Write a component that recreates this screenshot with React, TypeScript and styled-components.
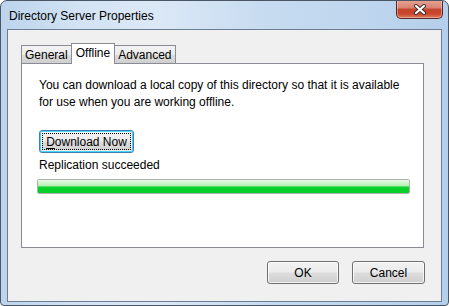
import styled, { createGlobalStyle } from "styled-components";

const Global = createGlobalStyle`
  html, body {
    margin: 0;
    padding: 0;
    background: #ffffff;
  }
  * {
    box-sizing: border-box;
  }
`;

const font = `"Liberation Sans", Arial, sans-serif`;

const App = () => {
  return (
    <>
      <Global />
      <Window>
        <TitleBar>
          <Title>Directory Server Properties</Title>
          <CloseButton aria-label="Close">
            <svg width="14" height="11" viewBox="0 0 14 11">
              <path d="M3 2 L11 9 M11 2 L3 9" stroke="#3b2b2b" strokeWidth="4" strokeLinecap="round" />
              <path d="M3 2 L11 9 M11 2 L3 9" stroke="#ffffff" strokeWidth="2.2" strokeLinecap="round" />
            </svg>
          </CloseButton>
        </TitleBar>
        <Client>
          <TabRow>
            <Tab>General</Tab>
            <Tab $active>Offline</Tab>
            <Tab>Advanced</Tab>
          </TabRow>
          <Panel>
            <Para>
              You can download a local copy of this directory so that it is available
              <br />
              for use when you are working offline.
            </Para>
            <Button $focused $width={95}>
              <FocusRing>
                <u>D</u>ownload Now
              </FocusRing>
            </Button>
            <Status>Replication succeeded</Status>
            <Progress>
              <ProgressFill style={{ width: "100%" }} />
            </Progress>
          </Panel>
          <Footer>
            <Button $width={72}>OK</Button>
            <Button $width={73}>Cancel</Button>
          </Footer>
        </Client>
      </Window>
    </>
  );
};
export default App;

const Window = styled.div`
  width: 449px;
  height: 306px;
  border: 1px solid #4a5566;
  border-radius: 7px 7px 4px 4px;
  padding: 0 6px 3px 6px;
  display: flex;
  flex-direction: column;
  background: linear-gradient(
    to right,
    #bcd4ec 0%,
    #d3e3f4 18%,
    #dbe8f6 35%,
    #c6dbf0 60%,
    #bfd6ee 80%,
    #b4cfeb 100%
  );
  font-family: ${font};
  overflow: hidden;
`;

const TitleBar = styled.div`
  height: 28px;
  display: flex;
  align-items: flex-start;
  justify-content: space-between;
`;

const Title = styled.div`
  font-size: 12px;
  color: #000;
  padding: 8px 0 0 2px;
  line-height: 15px;
  white-space: nowrap;
`;

const CloseButton = styled.div`
  width: 47px;
  height: 19px;
  margin-top: -1px;
  margin-right: -1px;
  border: 1px solid #5b2626;
  border-top: none;
  border-radius: 0 0 5px 5px;
  background: linear-gradient(
    to bottom,
    #e8a493 0%,
    #d98270 45%,
    #c6452e 50%,
    #c8432b 75%,
    #dc7a5c 100%
  );
  box-shadow: inset 0 0 0 1px rgba(255, 255, 255, 0.35);
  display: flex;
  align-items: center;
  justify-content: center;
`;

const Client = styled.div`
  flex: 1;
  border: 1px solid #6b7c93;
  background: #f0f0f0;
  padding: 13px 16px 16px 13px;
  display: flex;
  flex-direction: column;
`;

const TabRow = styled.div`
  display: flex;
  align-items: flex-end;
  height: 21px;
  margin-bottom: -1px;
  position: relative;
  z-index: 1;
`;

const Tab = styled.div<{ $active?: boolean }>`
  font-size: 12px;
  color: #000;
  line-height: 16px;
  white-space: nowrap;
  border: 1px solid #898c95;
  border-bottom: ${p => (p.$active ? "none" : "1px solid #898c95")};
  margin-left: -1px;
  &:first-child {
    margin-left: 0;
  }
  height: ${p => (p.$active ? "21px" : "19px")};
  padding: ${p => (p.$active ? "1px 4px 0 4px" : "1px 3px 0 3px")};
  background: ${p =>
    p.$active
      ? "#ffffff"
      : "linear-gradient(to bottom, #f3f3f3 0%, #ebebeb 50%, #dddddd 51%, #cfcfcf 100%)"};
  position: relative;
  z-index: ${p => (p.$active ? 2 : 1)};
`;

const Panel = styled.div`
  height: 185px;
  margin-right: 1px;
  border: 1px solid #898c95;
  background: #ffffff;
  padding: 13px 12px 0 15px;
  display: flex;
  flex-direction: column;
  align-items: flex-start;
`;

const Para = styled.p`
  margin: 0 0 0 2px;
  font-size: 12px;
  line-height: 17px;
  color: #000;
  white-space: nowrap;
`;

const Button = styled.div<{ $focused?: boolean; $width: number }>`
  width: ${p => p.$width}px;
  height: 23px;
  border: 1px solid ${p => (p.$focused ? "#3c7fb1" : "#707070")};
  border-radius: 3px;
  background: linear-gradient(
    to bottom,
    #f2f2f2 0%,
    #ebebeb 48%,
    #dddddd 52%,
    #cfcfcf 100%
  );
  box-shadow: ${p =>
    p.$focused
      ? "inset 0 0 0 1px #48d2f5, inset 0 0 0 2px rgba(255,255,255,0.6)"
      : "inset 0 0 0 1px rgba(255,255,255,0.75)"};
  font-size: 12px;
  color: #000;
  white-space: nowrap;
  display: flex;
  align-items: center;
  justify-content: center;
  margin-left: ${p => (p.$focused ? "2px" : "0")};
  margin-top: ${p => (p.$focused ? "19px" : "0")};
  padding: 2px;
`;

const FocusRing = styled.span`
  flex: 1;
  align-self: stretch;
  display: flex;
  align-items: center;
  justify-content: center;
  outline: 1px dotted #000;
  outline-offset: -1px;
  u {
    text-underline-offset: 2px;
  }
`;

const Status = styled.div`
  margin: 4px 0 0 2px;
  font-size: 12px;
  line-height: 17px;
  color: #000;
`;

const Progress = styled.div`
  margin-top: 5px;
  width: 373px;
  height: 15px;
  border: 1px solid #b0b0b0;
  border-radius: 2px;
  background: #e6e6e6;
  overflow: hidden;
`;

const ProgressFill = styled.div`
  height: 100%;
  background: linear-gradient(
    to bottom,
    #e6fbe4 0%,
    #bdf0bb 40%,
    #a6eaa6 48%,
    #0ad32e 52%,
    #04cc27 100%
  );
`;

const Footer = styled.div`
  margin-top: 13px;
  display: flex;
  justify-content: flex-end;
  gap: 13px;
`;
